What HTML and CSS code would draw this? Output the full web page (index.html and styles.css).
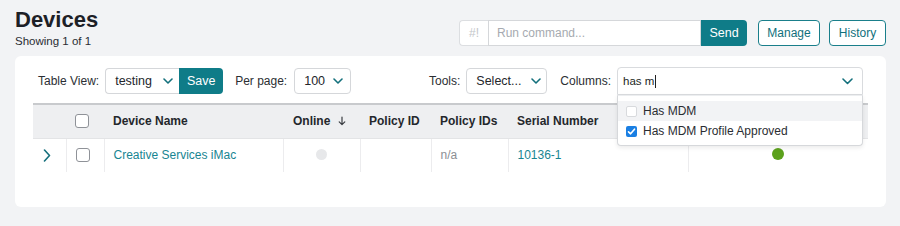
FILE: index.html
```html
<!DOCTYPE html>
<html lang="en">
<head>
<meta charset="utf-8">
<title>Devices</title>
<link rel="stylesheet" href="styles.css">
</head>
<body>
<div class="page">
  <header class="top">
    <div class="title">
      <h1>Devices</h1>
      <div class="sub">Showing 1 of 1</div>
    </div>
    <div class="actions">
      <div class="cmd">
        <span class="pre">#!</span>
        <span class="cmd-input">Run command...</span>
        <span class="send">Send</span>
      </div>
      <span class="btn-outline manage">Manage</span>
      <span class="btn-outline">History</span>
    </div>
  </header>

  <section class="card">
    <div class="toolbar">
      <div class="group">
        <span class="label">Table View:</span>
        <div class="joined">
          <span class="select sel-view">testing<svg class="chev" width="10" height="6" viewBox="0 0 10 6"><polyline points="1,1 5,5 9,1"/></svg></span>
          <span class="save">Save</span>
        </div>
        <span class="label pp">Per page:</span>
        <span class="select sel-pp">100<svg class="chev" width="10" height="6" viewBox="0 0 10 6"><polyline points="1,1 5,5 9,1"/></svg></span>
      </div>
      <div class="group right">
        <span class="label">Tools:</span>
        <span class="select sel-tools">Select...<svg class="chev" width="10" height="6" viewBox="0 0 10 6"><polyline points="1,1 5,5 9,1"/></svg></span>
        <span class="label cols">Columns:</span>
        <div class="colpick">
          <div class="col-input"><span class="typed">has m</span><span class="caret"></span><svg class="chev" width="11" height="7" viewBox="0 0 11 7"><polyline points="1,1 5.5,5.5 10,1"/></svg></div>
          <div class="menu">
            <div class="opt hover"><span class="cb-light"></span>Has MDM</div>
            <div class="opt"><span class="cb-on"><svg width="9" height="9" viewBox="0 0 9 9"><polyline points="1.5,4.8 3.6,6.8 7.5,2.2"/></svg></span>Has MDM Profile Approved</div>
          </div>
        </div>
      </div>
    </div>

    <table class="grid">
      <colgroup>
        <col style="width:33px"><col style="width:38px"><col style="width:179px"><col style="width:77px"><col style="width:71px"><col style="width:77px"><col style="width:180px"><col style="width:180px">
      </colgroup>
      <thead>
        <tr>
          <th></th>
          <th class="c-cb"><span class="cb"></span></th>
          <th>Device Name</th>
          <th class="sorted">Online<svg class="arrow" width="8" height="10" viewBox="0 0 8 10"><path d="M4 1 V8.5 M1.2 5.8 L4 8.6 L6.8 5.8"/></svg></th>
          <th>Policy ID</th>
          <th>Policy IDs</th>
          <th>Serial Number</th>
          <th class="center"></th>
        </tr>
      </thead>
      <tbody>
        <tr>
          <td class="c-exp"><svg width="8" height="13" viewBox="0 0 8 13"><polyline points="1.5,1 6.5,6.5 1.5,12"/></svg></td>
          <td class="c-cb"><span class="cb"></span></td>
          <td><span class="link">Creative Services iMac</span></td>
          <td class="center sorted-b"><span class="dot off"></span></td>
          <td></td>
          <td class="muted">n/a</td>
          <td><span class="link">10136-1</span></td>
          <td class="center"><span class="dot on"></span></td>
        </tr>
      </tbody>
    </table>
  </section>
</div>
</body>
</html>
```

FILE: styles.css
```css
* { box-sizing: border-box; }
html, body { margin: 0; padding: 0; }
body {
  background: #f2f3f5;
  font-family: "Liberation Sans", Arial, Helvetica, sans-serif;
  color: #1f2227;
  font-size: 12px;
}
.page { padding: 7px 14px 0 15px; width: 900px; height: 226px; }

.top { display: flex; justify-content: space-between; align-items: flex-start; }
h1 { margin: 0; font-size: 22px; line-height: 26px; font-weight: bold; color: #1d2026; }
.sub { margin-top: 1px; font-size: 11.5px; line-height: 14px; color: #2a2d33; }

.actions { display: flex; align-items: center; margin-top: 13px; }
.cmd { display: flex; height: 26px; width: 288px; }
.pre {
  width: 29px; border: 1px solid #dcdee1; border-right: none; border-radius: 4px 0 0 4px;
  background: #fff; color: #c3c6ca; display: flex; align-items: center; justify-content: center; font-size: 12px;
}
.cmd-input {
  flex: 1; border: 1px solid #d5d7da; background: #fff; color: #a6aab0;
  display: flex; align-items: center; padding-left: 8px; font-size: 12px;
}
.send {
  width: 46px; background: #0f7c88; color: #fff; border-radius: 0 4px 4px 0;
  display: flex; align-items: center; justify-content: center; font-size: 12.5px;
}
.btn-outline {
  height: 26px; padding: 0 9px; border: 1px solid #1a7f8b; border-radius: 4px; background: #fff;
  color: #11707c; display: flex; align-items: center; font-size: 12px;
}
.manage { width: 62px; justify-content: center; padding: 0; margin-left: 11px; margin-right: 9px; }
.btn-outline:last-child { width: 57px; justify-content: center; padding: 0; }

.card {
  margin-top: 8px; background: #fff; border-radius: 6px;
  padding: 11px 18px 35px 18px; height: 151px;
}

.toolbar { display: flex; align-items: center; height: 28px; padding-left: 5px; }
.group { display: flex; align-items: center; }
.group.right { margin-left: auto; margin-right: 5px; }
.label { color: #2b2e33; font-size: 12px; margin-right: 6px; }
.label.pp { margin-left: 12px; margin-right: 7px; }
.label.cols { margin-left: 13px; margin-right: 6px; }

.select {
  height: 26px; border: 1px solid #d5d7da; border-radius: 4px; background: #fff;
  display: flex; align-items: center; padding-left: 9px; color: #23262b; font-size: 12.5px;
}
.chev { fill: none; stroke: #13707c; stroke-width: 1.6; stroke-linecap: round; stroke-linejoin: round; }
.sel-view { width: 74px; border-radius: 4px 0 0 4px; border-right: none; }
.sel-view .chev { margin-left: 11px; }
.sel-pp { width: 57px; }
.sel-pp .chev { margin-left: 8px; }
.sel-tools { width: 81px; }
.sel-tools .chev { margin-left: 10px; }
.joined { display: flex; }
.save {
  width: 44px; height: 26px; background: #0f7c88; color: #fff; border-radius: 0 4px 4px 0;
  display: flex; align-items: center; justify-content: center; font-size: 12.5px;
}

.colpick { position: relative; width: 246px; }
.col-input {
  height: 28px; border: 1px solid #d9dbde; border-radius: 4px 4px 0 0; background: #fff;
  display: flex; align-items: center; padding-left: 5px; padding-right: 9px;
}
.typed { font-size: 11.5px; color: #1c1f24; }
.caret { width: 1px; height: 13px; background: #222; margin-left: 1px; }
.col-input .chev { margin-left: auto; }
.menu {
  position: absolute; left: 0; right: 0; top: 100%; z-index: 5;
  background: #fff; border: 1px solid #d6d8db; border-top: 1px solid #eceef0; border-radius: 0 0 4px 4px;
  box-shadow: 0 2px 4px rgba(0, 0, 0, 0.08);
  padding: 5px 0 4px;
}
.opt { height: 20px; display: flex; align-items: center; padding-left: 8px; font-size: 12px; color: #2a2d32; }
.opt.hover { background: #f2f3f5; }
.cb-light { width: 11px; height: 11px; border: 1px solid #d8dadd; border-radius: 2px; background: #fff; margin-right: 6px; }
.cb-on {
  width: 11px; height: 11px; border-radius: 2px; background: #1a7fe3; margin-right: 6px;
  display: flex; align-items: center; justify-content: center;
}
.cb-on svg { fill: none; stroke: #fff; stroke-width: 1.6; stroke-linecap: round; stroke-linejoin: round; }

.grid { margin-top: 8px; width: 835px; border-collapse: collapse; table-layout: fixed; }
.grid th {
  background: #eeeff1; height: 34px; text-align: left; padding: 0 0 0 9px;
  font-weight: bold; font-size: 12px; color: #24272c;
  border-top: 2px solid #c8cacd; border-bottom: 1px solid #e3e4e6; white-space: nowrap; overflow: hidden;
}
.grid th.sorted { padding-left: 10px; }
.arrow { margin-left: 8px; vertical-align: -1px; fill: none; stroke: #3a3d42; stroke-width: 1.2; stroke-linecap: round; stroke-linejoin: round; }
.grid td {
  height: 34px; padding: 0 0 0 9px; border-left: 1px solid #ececee; font-size: 12px; vertical-align: middle;
}
.grid td:first-child { border-left: none; }
.grid th.center, .grid td.center { text-align: center; padding-left: 0; }
.grid td.sorted-b { border-top: 1px solid #a7aaaf; }
.c-exp { padding-left: 10px !important; }
.c-exp svg { display: block; fill: none; stroke: #156f7c; stroke-width: 1.6; stroke-linecap: round; stroke-linejoin: round; }
.c-cb { padding-left: 9px !important; }
.cb { display: block; width: 14px; height: 14px; border: 1px solid #8f9298; border-radius: 3px; background: #fff; }
.link { color: #188592; }
.muted { color: #8b8e93; }
.dot { display: inline-block; width: 11px; height: 11px; border-radius: 50%; vertical-align: middle; position: relative; top: -2px; }
.dot.off { background: #e7e8ea; }
.dot.on { width: 12px; height: 12px; background: #5ca11c; }
```
